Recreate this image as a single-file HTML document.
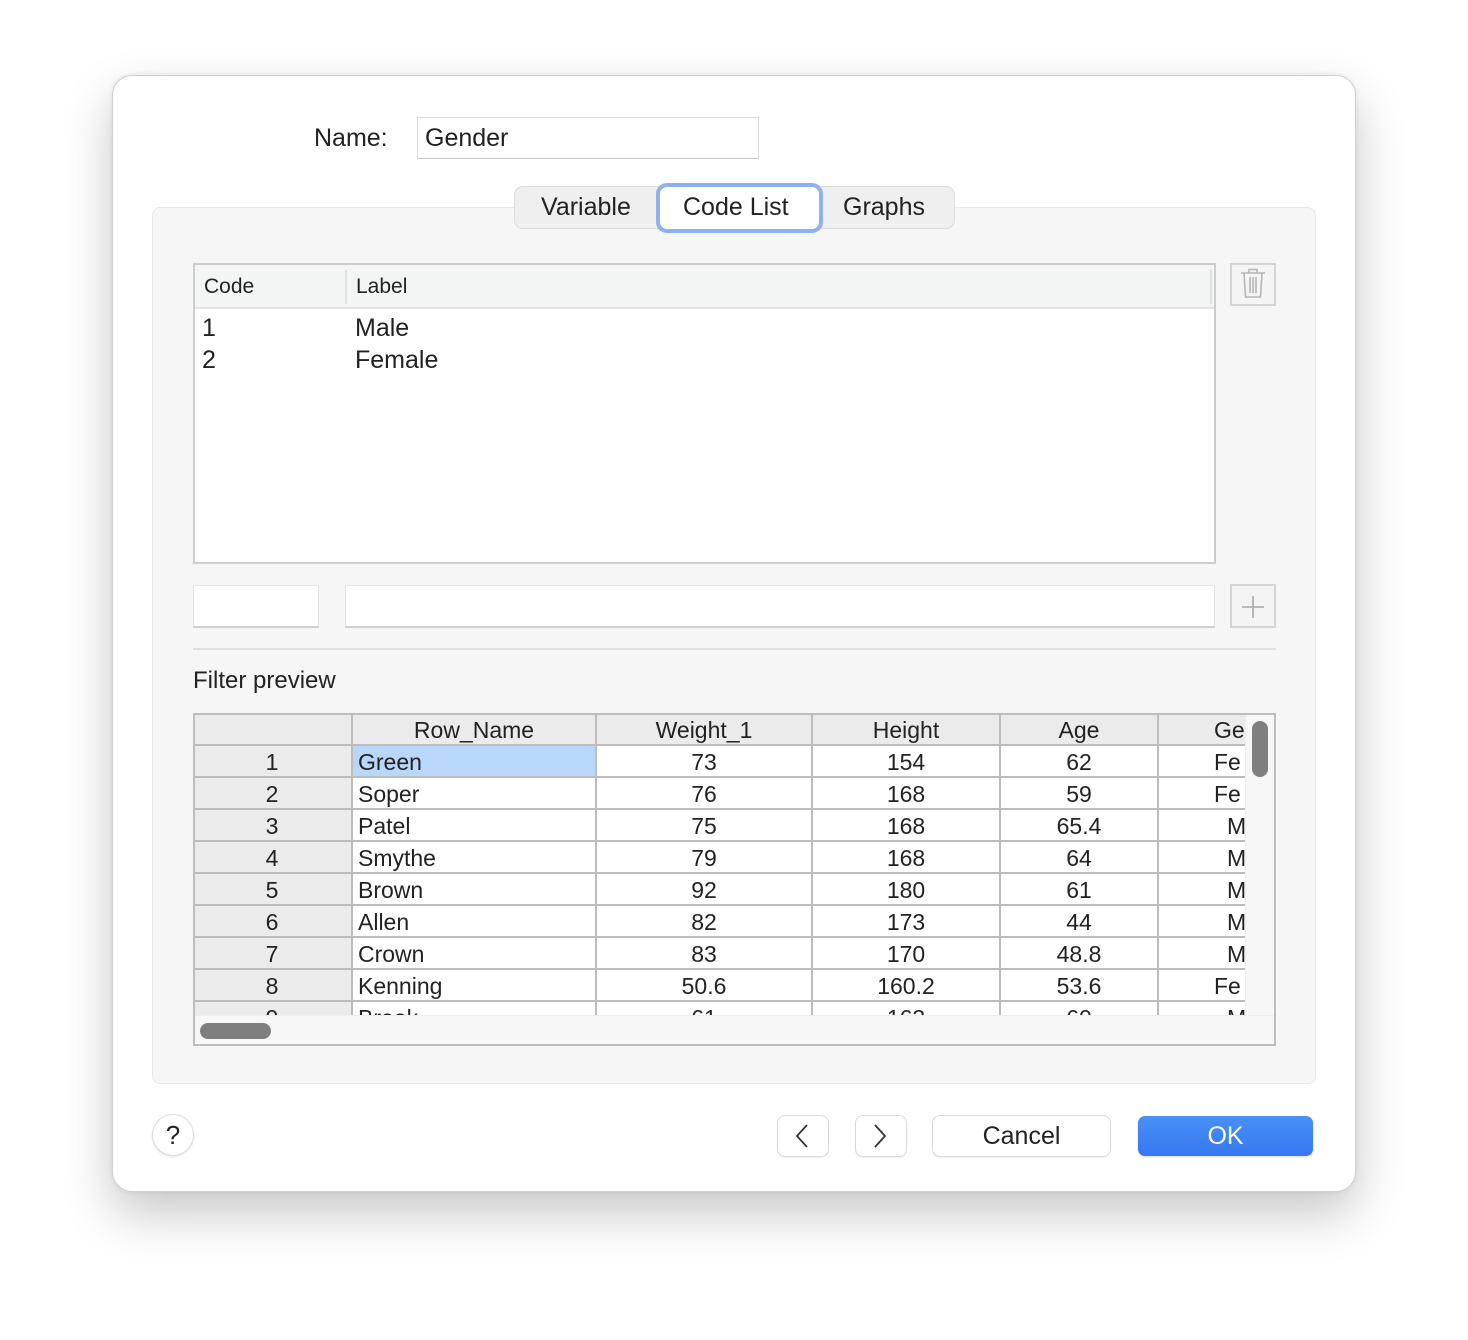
<!DOCTYPE html>
<html><head><meta charset="utf-8"><style>
*{box-sizing:border-box;margin:0;padding:0}
body{width:1468px;height:1340px;background:#fff;font-family:"Liberation Sans",sans-serif;color:#222;position:relative;overflow:hidden}
.a{position:absolute}
.win{left:112px;top:75px;width:1244px;height:1117px;border-radius:20px;background:#fff;border:1px solid #cfcfcf;box-shadow:0 22px 50px rgba(0,0,0,.22),0 0 6px rgba(0,0,0,.08)}
.panel{left:152px;top:207px;width:1164px;height:877px;background:#f6f6f6;border:1px solid #e8e8e8;border-radius:8px}
.t{font-size:25px;white-space:nowrap}
.grid{left:193px;top:713px;width:1083px;height:333px;border:2px solid #bdbdbd;background:#fff;overflow:hidden}
.cell{position:absolute;height:32px;line-height:32px;font-size:23px;border-right:2px solid #bdbdbd;border-bottom:2px solid #bdbdbd;white-space:nowrap;overflow:hidden}
.btn{position:absolute;background:#fff;border-radius:7px;box-shadow:0 0 0 1px #d9d9d9,0 1px 2px rgba(0,0,0,.15);text-align:center;font-size:25px;line-height:40px}
</style></head><body>
<div class="a win"></div>
<div class="a t" style="left:314px;top:124px">Name:</div>
<div class="a" style="left:417px;top:117px;width:342px;height:42px;background:#fff;border:1px solid #ddd;border-bottom-color:#c8c8c8"></div>
<div class="a t" style="left:425px;top:124px">Gender</div>
<div class="a panel"></div>
<div class="a" style="left:514px;top:186px;width:441px;height:43px;background:#efefef;border:1px solid #dcdcdc;border-radius:9px"></div>
<div class="a t" style="left:541px;top:193px">Variable</div>
<div class="a" style="left:656px;top:183px;width:167px;height:50px;border:4px solid #8fb1ef;border-radius:11px;background:#fff"></div>
<div class="a t" style="left:683px;top:193px">Code List</div>
<div class="a t" style="left:843px;top:193px">Graphs</div>

<div class="a" style="left:193px;top:263px;width:1023px;height:301px;border:2px solid #cdcdcd;background:#fff"></div>
<div class="a" style="left:195px;top:265px;width:1019px;height:44px;background:#f3f4f4;border-bottom:2px solid #e3e3e3"></div>
<div class="a" style="left:345px;top:270px;width:2px;height:34px;background:#e0e0e0"></div>
<div class="a" style="left:1210px;top:270px;width:2px;height:34px;background:#e0e0e0"></div>
<div class="a" style="left:204px;top:275px;font-size:21px">Code</div>
<div class="a" style="left:356px;top:275px;font-size:21px">Label</div>
<div class="a t" style="left:202px;top:314px">1</div><div class="a t" style="left:355px;top:314px">Male</div>
<div class="a t" style="left:202px;top:346px">2</div><div class="a t" style="left:355px;top:346px">Female</div>

<div class="a" style="left:1230px;top:263px;width:46px;height:43px;border:2px solid #d4d4d4;background:#f4f4f4"></div>
<svg class="a" style="left:1238px;top:266px" width="30" height="36" viewBox="0 0 30 36" fill="none" stroke="#b5b5b5" stroke-width="1.6"><path d="M3 7H27M11 7V3.5H19V7M6 7L7.5 31H22.5L24 7M12 11V27M15 11V27M18 11V27"/></svg>

<div class="a" style="left:193px;top:585px;width:126px;height:43px;background:#fff;border:1px solid #e2e2e2;border-bottom:2px solid #cfcfcf"></div>
<div class="a" style="left:345px;top:585px;width:870px;height:43px;background:#fff;border:1px solid #e2e2e2;border-bottom:2px solid #cfcfcf"></div>
<div class="a" style="left:1230px;top:584px;width:46px;height:44px;border:2px solid #d4d4d4;background:#f4f4f4"></div>
<svg class="a" style="left:1240px;top:594px" width="26" height="26"><path d="M2 13H24M13 2V24" stroke="#a8a8a8" stroke-width="1.6"/></svg>
<div class="a" style="left:193px;top:648px;width:1083px;height:2px;background:#e0e0e0"></div>
<div class="a t" style="left:193px;top:667px;font-size:24px">Filter preview</div>

<div class="a grid">
<div class="a" style="left:-2px;top:-1px;width:1090px;height:340px">
<div class="cell" style="left:0;top:0;width:160px;background:#ebebeb"></div>
<div class="cell" style="left:160px;top:0;width:244px;background:#ebebeb;text-align:center">Row_Name</div>
<div class="cell" style="left:404px;top:0;width:216px;background:#ebebeb;text-align:center">Weight_1</div>
<div class="cell" style="left:620px;top:0;width:188px;background:#ebebeb;text-align:center">Height</div>
<div class="cell" style="left:808px;top:0;width:158px;background:#ebebeb;text-align:center">Age</div>
<div class="cell" style="left:966px;top:0;width:120px;background:#ebebeb;padding-left:55px">Ge</div>
<div id="rows"></div>
</div>
<div class="a" style="left:1050px;top:0;width:31px;height:300px;background:#f7f7f7;border-left:1px solid #eee"></div>
<div class="a" style="left:1057px;top:6px;width:16px;height:56px;background:#7f7f7f;border-radius:8px"></div>
<div class="a" style="left:0;top:300px;width:1081px;height:31px;background:#f7f7f7;border-top:1px solid #eee"></div>
<div class="a" style="left:5px;top:308px;width:71px;height:16px;background:#7f7f7f;border-radius:8px"></div>
</div>

<div class="a" style="left:153px;top:1115px;width:40px;height:40px;border-radius:50%;background:#fff;box-shadow:0 0 0 1px #ddd,0 1px 3px rgba(0,0,0,.2);text-align:center;line-height:40px;font-size:26px">?</div>
<div class="btn" style="left:778px;top:1116px;width:50px;height:40px"></div>
<svg class="a" style="left:792px;top:1123px" width="20" height="26"><path d="M15 2L5 13L15 24" fill="none" stroke="#333" stroke-width="1.8"/></svg>
<div class="btn" style="left:856px;top:1116px;width:50px;height:40px"></div>
<svg class="a" style="left:870px;top:1123px" width="20" height="26"><path d="M5 2L15 13L5 24" fill="none" stroke="#333" stroke-width="1.8"/></svg>
<div class="btn" style="left:933px;top:1116px;width:177px;height:40px">Cancel</div>
<div class="btn" style="left:1138px;top:1116px;width:175px;height:40px;background:linear-gradient(#4a90f7,#3578f2);color:#fff;box-shadow:0 1px 2px rgba(0,0,0,.15)">OK</div>

<script>
var d=[["Green",73,154,62,"Fe"],["Soper",76,168,59,"Fe"],["Patel",75,168,65.4,"M"],["Smythe",79,168,64,"M"],["Brown",92,180,61,"M"],["Allen",82,173,44,"M"],["Crown",83,170,48.8,"M"],["Kenning",50.6,160.2,53.6,"Fe"],["Brook",61,163,60,"M"]];
var h="";d.forEach(function(r,i){var t=32+i*32;
h+='<div class="cell" style="left:0;top:'+t+'px;width:160px;background:#ebebeb;text-align:center">'+(i+1)+'</div>';
h+='<div class="cell" style="left:160px;top:'+t+'px;width:244px;padding-left:5px;'+(i==0?'background:#b9d7fb':'')+'">'+r[0]+'</div>';
h+='<div class="cell" style="left:404px;top:'+t+'px;width:216px;text-align:center">'+r[1]+'</div>';
h+='<div class="cell" style="left:620px;top:'+t+'px;width:188px;text-align:center">'+r[2]+'</div>';
h+='<div class="cell" style="left:808px;top:'+t+'px;width:158px;text-align:center">'+r[3]+'</div>';
h+='<div class="cell" style="left:966px;top:'+t+'px;width:120px;padding-left:'+(r[4]=="Fe"?55:68)+'px">'+r[4]+'</div>';});
document.getElementById("rows").innerHTML=h;
</script>
</body></html>
